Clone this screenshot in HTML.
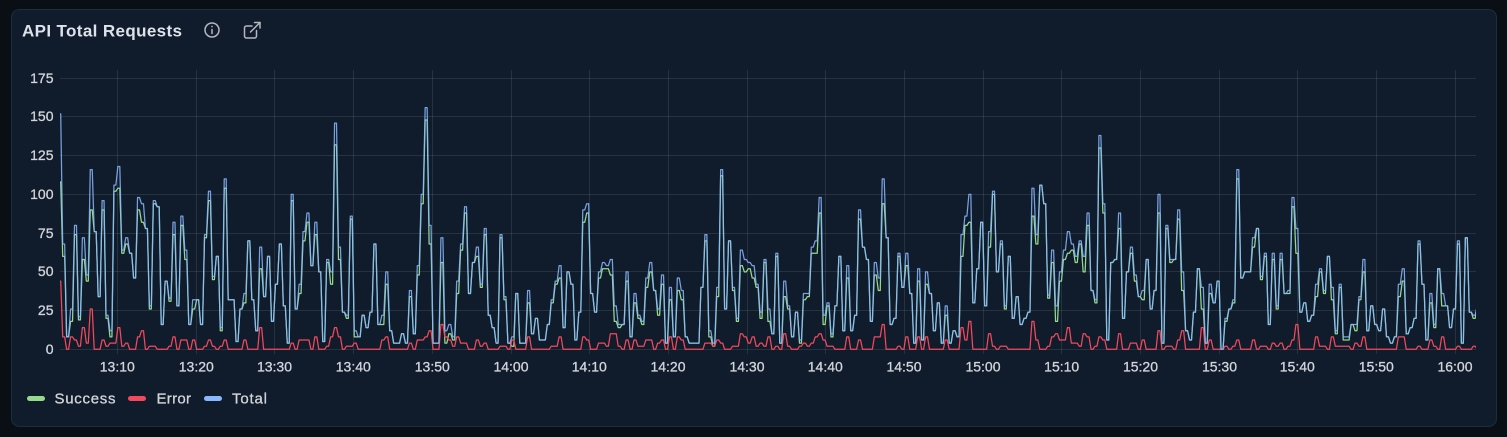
<!DOCTYPE html>
<html><head><meta charset="utf-8"><title>API Total Requests</title>
<style>
html,body{margin:0;padding:0;width:1507px;height:437px;overflow:hidden;background:#0a0e15}
svg{display:block;position:absolute;left:0;top:0}
text{font-family:"Liberation Sans",Arial,sans-serif;fill:#d2d5da;font-size:14px;stroke:#d2d5da;stroke-width:.3px}
</style></head><body>
<svg id="c" width="1507" height="437" viewBox="0 0 1507 437" xmlns="http://www.w3.org/2000/svg">
<defs><clipPath id="p"><rect x="60" y="60" width="1416" height="292"/></clipPath></defs>
<rect x="11.5" y="9.5" width="1485" height="417" rx="8" fill="#101c2b" stroke="#15303f"/>
<text x="22" y="36.5" textLength="160" lengthAdjust="spacing" style="font-size:17px;font-weight:700;fill:#dde3ea;stroke:none">API Total Requests</text>
<g fill="none" stroke="#b4b8be" stroke-width="1.5" stroke-linecap="round" stroke-linejoin="round">
<circle cx="212" cy="30" r="7"/><path d="M212 29.5v4"/><path d="M212 26.4v.2"/>
<path d="M252 26h-5.5a2 2 0 0 0-2 2v8a2 2 0 0 0 2 2h8a2 2 0 0 0 2-2v-5.5"/><path d="M250.5 32 260 22.5"/><path d="M254.5 22.5h5.5v5.5"/>
</g>
<g stroke="#ccccdc" stroke-opacity=".13" stroke-width="1" shape-rendering="crispEdges">
<path d="M60 78.5H1476M60 116.5H1476M60 155.5H1476M60 194.5H1476M60 233.5H1476M60 271.5H1476M60 310.5H1476M60 349.5H1476"/>
<path d="M117.5 70V354M196.5 70V354M274.5 70V354M353.5 70V354M432.5 70V354M511.5 70V354M589.5 70V354M668.5 70V354M747.5 70V354M825.5 70V354M904.5 70V354M983.5 70V354M1061.5 70V354M1140.5 70V354M1219.5 70V354M1297.5 70V354M1376.5 70V354M1455.5 70V354"/>
</g>
<g text-anchor="end">
<text x="53.5" y="83">175</text><text x="53.5" y="121">150</text><text x="53.5" y="160">125</text><text x="53.5" y="199">100</text><text x="53.5" y="238">75</text><text x="53.5" y="276">50</text><text x="53.5" y="315">25</text><text x="53.5" y="354">0</text>
</g>
<g text-anchor="middle">
<text x="117.3" y="371.5">13:10</text><text x="196.3" y="371.5">13:20</text><text x="274.5" y="371.5">13:30</text><text x="353.3" y="371.5">13:40</text><text x="432.3" y="371.5">13:50</text><text x="511" y="371.5">14:00</text><text x="589.3" y="371.5">14:10</text><text x="668" y="371.5">14:20</text><text x="747" y="371.5">14:30</text><text x="825.3" y="371.5">14:40</text><text x="904" y="371.5">14:50</text><text x="983" y="371.5">15:00</text><text x="1061.7" y="371.5">15:10</text><text x="1140.5" y="371.5">15:20</text><text x="1219.5" y="371.5">15:30</text><text x="1297.3" y="371.5">15:40</text><text x="1376.3" y="371.5">15:50</text><text x="1455" y="371.5">16:00</text>
</g>
<g clip-path="url(#p)" fill="none" stroke-width="1.25" stroke-linejoin="round">
<path id="g" stroke="#96d98d"/>
<path id="r" stroke="#f2495c"/>
<path id="b" stroke="#8ab8ff" stroke-opacity=".85"/>
</g>
<rect x="27" y="396" width="18" height="5" rx="2.5" fill="#96d98d"/>
<rect x="128" y="396" width="18" height="5" rx="2.5" fill="#f2495c"/>
<rect x="204" y="396" width="18" height="5" rx="2.5" fill="#8ab8ff"/>
<text x="54.5" y="403.5" textLength="61" lengthAdjust="spacing" style="font-size:15px">Success</text><text x="156.5" y="403.5" textLength="34.5" lengthAdjust="spacing" style="font-size:15px">Error</text><text x="232" y="403.5" textLength="35" lengthAdjust="spacing" style="font-size:15px">Total</text>
</svg>
<script>
var T=[],E=[];
function put(a,s,l){for(var i=0;i<l.length;i++)a[s+i]=l[i];}
put(T,0,[152,68,8,26,80,21,72,48,116,76,34,96,22,12,106,118,64,72,62,46,98,94,78,28,96,92,16,44,33,82,28,86,64,16,32,32,16,74,102,47,60,14,110,32,32,5,26,36,70,32,12,66]);
put(E,0,[44,8,0,8,6,2,14,4,26,0,0,6,2,4,4,14,2,4,0,0,8,12,0,2,2,0,0,0,2,8,0,6,6,0,6,0,0,2,6,2,0,2,6,0,0,0,0,6,0,0,0,14]);
put(T,52,[34,60,18,42,68,28,4,100,26,42,76,88,54,82,50,5,58,50,146,66,24,22,86,12,8,22,14,24,68,16,22,50,12,4,4,10,4,38,10,54,100,156,80,4,4,72,12,16,8,44,68,92,36,56,66,42,78,22,14,4,74,34,4,8,36,4]);
put(E,52,[0,0,0,0,0,0,0,4,0,6,6,6,0,8,0,0,2,8,14,8,0,2,2,4,0,0,0,0,0,0,6,8,0,0,0,0,0,4,0,6,6,8,12,0,0,16,8,6,2,8,4,4,0,0,6,2,4,0,0,0,2,2,0,6,0,0]);
put(T,118,[4,38,10,20,6,6,16,32,44,54,14,50,42,6,24,90,94,36,24,50,56,54,58,28,16,16,50,8,36,22,18,46,56,38,26,48,4,40,8,46,38,8,4,4,4,40,74,12,4,40,116,26,70,40,20,64,58,56,54,42,24,58,26,10,62,4]);
put(E,118,[0,8,0,0,0,0,0,2,2,8,0,0,0,0,0,8,6,0,0,4,4,2,10,10,2,0,6,0,6,2,2,6,6,0,4,6,0,8,0,8,6,0,0,0,0,0,4,4,2,6,4,0,0,2,2,10,8,4,8,2,4,2,8,0,2,0]);
put(T,184,[44,28,8,24,6,36,36,66,70,98,22,30,10,28,60,12,54,12,22,90,66,58,18,56,46,110,72,16,20,62,40,62,36,4,52,6,50,36,12,30,4,28,4,12,8,74,86,100,30,52,82,28,76,102,50,70,28,60,20,34,16,20,24,104,74,106]);
put(E,184,[10,2,0,0,2,4,2,4,8,10,6,2,2,0,0,0,8,0,0,6,0,0,0,8,8,16,0,0,0,2,0,8,0,0,8,0,8,0,0,0,0,6,0,0,0,14,6,18,0,0,0,0,10,2,0,2,2,0,0,0,0,0,0,18,6,0]);
put(T,250,[94,35,64,28,50,64,76,68,60,70,60,88,38,32,138,94,6,56,58,88,20,50,66,48,34,38,58,26,38,100,4,80,58,58,90,50,12,6,24,52,40,4,42,30,44,0,20,26,32,116,46,50,50,72,78,47,62,16,62,28,62]);
put(E,250,[0,2,8,10,6,6,14,4,4,2,10,8,0,2,8,6,0,0,0,10,0,0,4,4,0,6,0,0,0,12,0,2,2,0,6,12,0,0,0,0,14,0,6,0,0,0,2,0,2,6,0,0,0,6,0,2,2,0,4,2,4]);
put(T,311,[36,38,98,78,24,30,18,22,42,52,38,60,40,12,42,8,8,16,16,34,58,12,28,16,12,26,8,4,8,42,52,10,14,20,70,42,6,36,16,52,36,28,14,26,70,4,72,24,22,28]);
put(E,311,[0,2,6,16,0,0,0,0,8,2,2,0,8,2,2,2,2,0,4,2,8,0,0,0,0,0,0,0,0,8,8,0,0,0,2,0,0,6,2,0,8,0,0,0,2,0,0,0,2,0]);
function path(f){var d="",k,x,y;for(k=0;k<=360;k++){x=58.75+3.94*k;y=349.3-1.549*f(k);d+=(k?"L":"M")+x.toFixed(2)+" "+y.toFixed(2)+"L"+(x+1.97).toFixed(2)+" "+y.toFixed(2);}return d;}
document.getElementById("g").setAttribute("d",path(function(k){return Math.max(0,T[k]-E[k]);}));
document.getElementById("r").setAttribute("d",path(function(k){return E[k];}));
document.getElementById("b").setAttribute("d",path(function(k){return T[k];}));
</script>
</body></html>
